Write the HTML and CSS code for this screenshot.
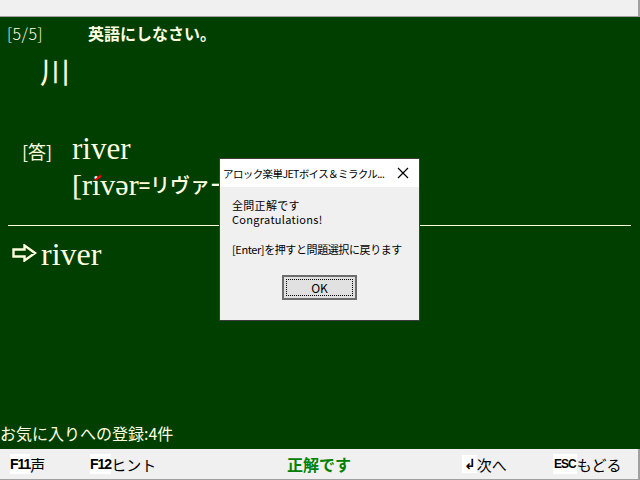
FILE: index.html
```html
<!DOCTYPE html>
<html>
<head>
<title>アロック楽単JETボイス</title>
<link rel="stylesheet" href="styles.css">
</head>
<body>
  <div class="top-bar"></div>
  <div class="board">
    <div class="question-line">
      <span class="count">[5/5]</span>
      <span class="order">英語にしなさい。</span>
    </div>
    <div class="kanji">川</div>
    <div class="answer-row">
      <span class="answer-tag">[答]</span>
      <span class="answer-word">river</span>
    </div>
    <div class="pron">[r<span class="accent">i</span>vər<span class="kana">=リヴァー</span>]</div>
    <div class="rule"></div>
    <div class="typed">
      <svg class="arrow" width="26" height="18" viewBox="0 0 26 18">
        <path d="M2 5.5H13V1.5L23.5 9L13 16.5V12.5H2Z" fill="none" stroke="#ffffe0" stroke-width="2.4" stroke-linejoin="miter"/>
      </svg>
      <span class="typed-word">river</span>
    </div>
    <div class="fav">お気に入りへの登録:4件</div>
  </div>
  <div class="status-bar">
    <span class="key-item item-f11"><b class="key">F11</b>声</span>
    <span class="key-item item-f12"><b class="key">F12</b>ヒント</span>
    <span class="result">正解です</span>
    <span class="key-item item-next"><b class="key enter">&#8626;</b>次へ</span>
    <span class="key-item item-esc"><b class="key esc">ESC</b>もどる</span>
  </div>

  <div class="dialog">
    <div class="dialog-title">
      <span class="dialog-caption">アロック楽単JETボイス＆ミラクル...</span>
      <svg class="close" width="12" height="12" viewBox="0 0 12 12"><path d="M1 1L11 11M11 1L1 11" stroke="#000" stroke-width="1.2"/></svg>
    </div>
    <div class="dialog-body">
      <p class="congrats">全問正解です<br>Congratulations!</p>
      <p>[Enter]を押すと問題選択に戻ります</p>
    </div>
    <div class="dialog-buttons">
      <button class="ok-button"><span class="ok-focus">OK</span></button>
    </div>
  </div>
</body>
</html>
```

FILE: styles.css
```css
body{
  margin: 0;
  width: 640px;
  height: 480px;
  overflow: hidden;
  position: relative;
  background-color: #003f00;
  font-family: "Noto Sans CJK JP", sans-serif;
  color: #ffffe0;
}
.top-bar{
  height: 16px;
  background-color: #f0f0f0;
  border-bottom: 1px solid #a0a0a0;
  border-right: 2px solid #a0a0a0;
}
.board{
  height: 432px;
  display: flex;
  flex-direction: column;
}
.question-line{
  display: flex;
  align-items: center;
  height: 32px;
  padding-left: 7px;
  font-size: 16px;
}
.count{
  width: 81px;
  font-size: 16px;
  font-weight: 300;
  letter-spacing: 0.5px;
}
.order{
  font-weight: bold;
}
.kanji{
  padding-left: 40px;
  font-size: 30px;
  height: 42px;
  line-height: 42px;
}
.answer-row{
  margin-top: 40px;
  display: flex;
  align-items: baseline;
  padding-left: 22px;
}
.answer-tag{
  font-size: 18px;
  width: 50px;
}
.answer-word{
  font-family: "Liberation Serif", serif;
  font-size: 31px;
}
.pron{
  padding-left: 72px;
  font-family: "Liberation Serif", serif;
  font-size: 30px;
  line-height: 36px;
}
.accent{
  position: relative;
}
.accent::after{
  content: "";
  position: absolute;
  left: 2px;
  top: 9px;
  width: 8px;
  height: 2px;
  background-color: #ff0000;
  transform: rotate(-35deg);
}
.kana{
  font-family: "Noto Sans CJK JP", sans-serif;
  font-size: 20px;
  font-weight: 500;
  vertical-align: 2px;
}
.rule{
  margin: 22px 9px 0 8px;
  height: 1px;
  background-color: #ffffe0;
}
.typed{
  display: flex;
  align-items: center;
  padding-left: 8px;
  margin-top: 10px;
}
.arrow{
  width: 33px;
  margin-bottom: 4px;
}
.typed-word{
  font-family: "Liberation Serif", serif;
  font-size: 32px;
}
.fav{
  margin-top: auto;
  margin-bottom: 4px;
  font-size: 16px;
}
.status-bar{
  height: 30px;
  background-color: #f0f0f0;
  border-bottom: 1px solid #a0a0a0;
  border-right: 2px solid #a0a0a0;
  display: flex;
  align-items: center;
  font-size: 15px;
  color: #000;
}
.key-item{
  display: flex;
  align-items: center;
}
.key{
  background-color: #fff;
  font-family: "Liberation Sans", sans-serif;
  font-size: 14px;
  letter-spacing: -1px;
  padding: 2px 0;
}
.item-f11{
  margin-left: 10px;
  width: 80px;
}
.item-f12{
  width: 197px;
}
.result{
  color: #008000;
  font-weight: bold;
  font-size: 16px;
  width: 175px;
}
.enter{
  font-family: "DejaVu Sans", sans-serif;
  padding: 1px 2px;
}
.item-next{
  width: 91px;
}
.esc{
  font-family: "Liberation Sans Narrow", "Liberation Sans", sans-serif;
  font-size: 12px;
  padding: 3px 1px;
}
.dialog{
  position: absolute;
  left: 219px;
  top: 158px;
  width: 199px;
  height: 161px;
  background-color: #f0f0f0;
  border: 1px solid #3c3c3c;
  color: #000;
  font-size: 11px;
  display: flex;
  flex-direction: column;
}
.dialog-title{
  height: 28px;
  flex-shrink: 0;
  background-color: #fff;
  display: flex;
  align-items: center;
  justify-content: space-between;
  padding: 0 10px 0 3px;
}
.dialog-caption{
  white-space: nowrap;
  font-size: 10.5px;
  letter-spacing: -0.6px;
}
.dialog-body{
  padding: 11px 12px 0 12px;
  line-height: 14px;
  white-space: nowrap;
}
.dialog-body p{
  margin: 0 0 16px 0;
  letter-spacing: -0.4px;
}
.dialog-body .congrats{
  letter-spacing: 0.3px;
}
.dialog-buttons{
  display: flex;
  justify-content: center;
  margin-top: 3px;
}
.ok-button{
  width: 75px;
  height: 25px;
  background-color: #e1e1e1;
  border: 2px solid #6d6d6d;
  padding: 2px;
  font-family: "Noto Sans CJK JP", sans-serif;
  font-size: 12px;
}
.ok-focus{
  display: block;
  height: 100%;
  border: 1px dotted #000;
  line-height: 15px;
  box-sizing: border-box;
}
```
